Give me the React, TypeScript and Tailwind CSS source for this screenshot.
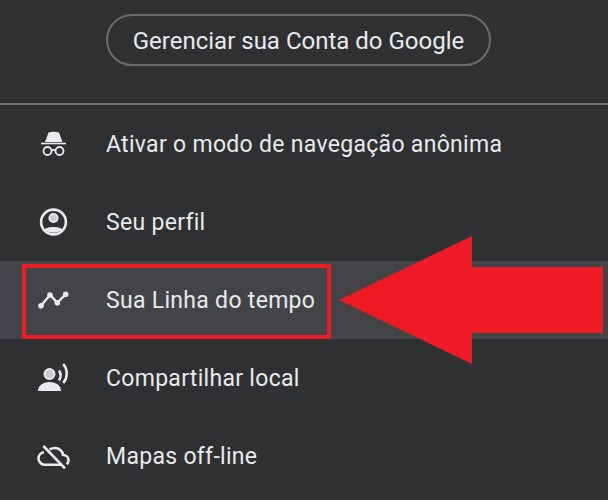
import type { ReactNode } from "react";

function IncognitoIcon() {
  return (
    <svg viewBox="0 0 34 34" className="w-[34px] h-[34px]" fill="none">
      <path d="M11.500 5.500q5-1.500 10.500 0l3.500 9.500H8z" fill="#e8eaed" />
      <path d="M4 16.500h25" stroke="#e8eaed" strokeWidth="1.600" />
      <circle cx="10.500" cy="24" r="4" stroke="#e8eaed" strokeWidth="1.800" />
      <circle cx="22.500" cy="24" r="4" stroke="#e8eaed" strokeWidth="1.800" />
      <path d="M14.500 23.500q2-1.200 4 0" stroke="#e8eaed" strokeWidth="1.600" />
    </svg>
  );
}

function ProfileIcon() {
  return (
    <svg viewBox="0 0 34 34" className="w-[34px] h-[34px]" fill="none">
      <circle cx="16.500" cy="17" r="12.400" stroke="#e8eaed" strokeWidth="2.600" />
      <circle cx="16.500" cy="13" r="4.200" stroke="#e8eaed" strokeWidth="1.800" fill="#c9cbce" />
      <path d="M7.500 24.500c2-3.400 16-3.400 18 0-4 4.200-14 4.200-18 0z" fill="#e8eaed" />
    </svg>
  );
}

function TimelineIcon() {
  return (
    <svg viewBox="0 0 34 34" className="w-[34px] h-[34px]" fill="none">
      <path d="M4 22.700 13 12l7.300 7.700 8.400-8.400" stroke="#e8eaed" strokeWidth="2.400" strokeLinejoin="round" />
      <circle cx="4" cy="22.700" r="2.800" fill="#e8eaed" />
      <circle cx="13" cy="12" r="2.800" fill="#e8eaed" />
      <circle cx="20.300" cy="19.700" r="2.800" fill="#e8eaed" />
      <circle cx="28.700" cy="11.300" r="2.800" fill="#e8eaed" />
    </svg>
  );
}

function ShareIcon() {
  return (
    <svg viewBox="0 0 34 34" className="w-[34px] h-[34px]" fill="none">
      <circle cx="12.500" cy="13" r="5" stroke="#e8eaed" strokeWidth="2" fill="#c9cbce" />
      <path d="M1 30c0-5.500 5-9 11.500-9S24 24.500 24 30z" fill="#e8eaed" />
      <path d="M22 9.500c2 3 2 7 0 10" stroke="#e8eaed" strokeWidth="2.600" />
      <path d="M26.300 3c4.600 5.500 4.600 13.500 0 19" stroke="#e8eaed" strokeWidth="2.600" />
    </svg>
  );
}

function CloudOffIcon() {
  return (
    <svg viewBox="0 0 34 34" className="w-[34px] h-[34px]" fill="none" stroke="#e8eaed" strokeWidth="2.600">
      <path d="M6.300 7 28 29.300" />
      <path d="M12.500 10.500c1.700-1 3.500-1.500 5.500-1.500 4 0 7.500 3 8 6.800 3.300.3 5.500 2.700 5.500 5.500 0 1.600-.7 3-1.800 3.900" />
      <path d="M24.500 25.800H8.500c-4 0-7-2.800-7-6.300 0-3.200 2.400-5.700 5.500-6.200" />
    </svg>
  );
}

const rows: { label: string; icon: ReactNode; active?: boolean }[] = [
  { label: "Ativar o modo de navegação anônima", icon: <IncognitoIcon /> },
  { label: "Seu perfil", icon: <ProfileIcon /> },
  { label: "Sua Linha do tempo", icon: <TimelineIcon />, active: true },
  { label: "Compartilhar local", icon: <ShareIcon /> },
  { label: "Mapas off-line", icon: <CloudOffIcon /> },
];

export default function App() {
  return (
    <div className="relative w-[608px] h-[500px] overflow-hidden bg-[#2f3032] text-[#e8eaed] font-['Roboto',sans-serif]">
      <div className="pt-[14px] pl-[106px]">
        <button className="flex items-center justify-center w-[385px] h-[52px] pt-[2px] rounded-full border-2 border-[#6a6c6f] text-[24px]">
          Gerenciar sua Conta do Google
        </button>
      </div>
      <div className="mt-[37px] h-[2px] bg-[#6f7072]" />

      {rows.map((row) => (
        <div
          key={row.label}
          className={`relative flex items-center h-[78px] pl-[37px] ${row.active ? "bg-[#434448]" : ""}`}
        >
          {row.icon}
          <span className="ml-[35px] pt-[2px] text-[23px] tracking-[0.3px]">{row.label}</span>
          {row.active && (
            <div className="absolute left-[22px] top-[3px] w-[309px] h-[75px] border-4 border-[#ed1c24]" />
          )}
        </div>
      ))}

      {/* Arrow */}
      <svg viewBox="0 0 608 500" className="absolute inset-0 w-[608px] h-[500px]">
        <path d="M339 300 472 236V267H603V333H472V364z" fill="#ed1c24" />
      </svg>
    </div>
  );
}
